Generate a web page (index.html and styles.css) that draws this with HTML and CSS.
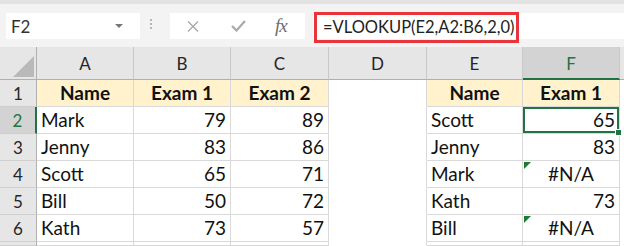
FILE: index.html
```
<!DOCTYPE html>
<html lang="en">
<head>
    <meta charset="UTF-8">
    <title>VLOOKUP example</title>
    <link rel="stylesheet" href="styles.css">
</head>
<body>
    <div class="formula-bar">
        <div class="name-box">
            <span>F2</span>
            <span class="caret"></span>
        </div>
        <div class="grip"><i></i><i></i><i></i></div>
        <div class="fx-box">
            <svg class="icon-cancel" width="12" height="11" viewBox="0 0 12 11">
                <path d="M1 0.5 L11 10.5 M11 0.5 L1 10.5" stroke="#a9a9a9" stroke-width="1.4" fill="none"/>
            </svg>
            <svg class="icon-enter" width="15" height="12" viewBox="0 0 15 12">
                <path d="M1 6 L5.5 10.5 L14 1" stroke="#a9a9a9" stroke-width="2.2" fill="none"/>
            </svg>
            <span class="icon-fx">fx</span>
        </div>
        <div class="formula-input">
            <span class="formula">=VLOOKUP(E2,A2:B6,2,0)</span>
        </div>
    </div>

    <div class="sheet">
        <!-- column headers -->
        <div class="cell corner"><span class="corner-mark"></span></div>
        <div class="cell col-head">A</div>
        <div class="cell col-head">B</div>
        <div class="cell col-head">C</div>
        <div class="cell col-head">D</div>
        <div class="cell col-head">E</div>
        <div class="cell col-head active">F</div>
        <div class="cell col-head"></div>

        <!-- row 1 -->
        <div class="cell row-head">1</div>
        <div class="cell head">Name</div>
        <div class="cell head">Exam 1</div>
        <div class="cell head">Exam 2</div>
        <div class="cell blank"></div>
        <div class="cell head">Name</div>
        <div class="cell head">Exam 1</div>
        <div class="cell blank"></div>

        <!-- row 2 -->
        <div class="cell row-head active">2</div>
        <div class="cell">Mark</div>
        <div class="cell num">79</div>
        <div class="cell num">89</div>
        <div class="cell blank"></div>
        <div class="cell">Scott</div>
        <div class="cell num selected">65</div>
        <div class="cell blank"></div>

        <!-- row 3 -->
        <div class="cell row-head">3</div>
        <div class="cell">Jenny</div>
        <div class="cell num">83</div>
        <div class="cell num">86</div>
        <div class="cell blank"></div>
        <div class="cell">Jenny</div>
        <div class="cell num">83</div>
        <div class="cell blank"></div>

        <!-- row 4 -->
        <div class="cell row-head">4</div>
        <div class="cell">Scott</div>
        <div class="cell num">65</div>
        <div class="cell num">71</div>
        <div class="cell blank"></div>
        <div class="cell">Mark</div>
        <div class="cell error">#N/A</div>
        <div class="cell blank"></div>

        <!-- row 5 -->
        <div class="cell row-head">5</div>
        <div class="cell">Bill</div>
        <div class="cell num">50</div>
        <div class="cell num">72</div>
        <div class="cell blank"></div>
        <div class="cell">Kath</div>
        <div class="cell num">73</div>
        <div class="cell blank"></div>

        <!-- row 6 -->
        <div class="cell row-head">6</div>
        <div class="cell">Kath</div>
        <div class="cell num">73</div>
        <div class="cell num">57</div>
        <div class="cell blank"></div>
        <div class="cell">Bill</div>
        <div class="cell error">#N/A</div>
        <div class="cell blank"></div>

        <!-- row 7 (cut off) -->
        <div class="cell row-head"></div>
        <div class="cell"></div>
        <div class="cell"></div>
        <div class="cell"></div>
        <div class="cell blank"></div>
        <div class="cell"></div>
        <div class="cell"></div>
        <div class="cell blank"></div>
    </div>
</body>
</html>
```

FILE: styles.css
```
body {
    margin: 0;
    font-family: Lato, "Open Sans", sans-serif;
    background: #fff;
    overflow: hidden;
}

/* formula bar */
.formula-bar {
    display: flex;
    align-items: flex-start;
    height: 47px;
    padding: 9px 0 0 6px;
    box-sizing: border-box;
    border-top: 4px solid #e2e2e2;
    background: #f3f3f3;
}
.name-box {
    width: 134px;
    height: 26px;
    box-sizing: border-box;
    padding: 0 17px 0 5px;
    display: flex;
    align-items: center;
    justify-content: space-between;
    background: #fff;
    font-size: 17px;
    color: #333;
}
.caret {
    width: 0;
    height: 0;
    border-left: 4px solid transparent;
    border-right: 4px solid transparent;
    border-top: 4px solid #777;
}
.grip {
    display: flex;
    flex-direction: column;
    gap: 2px;
    margin: 6px 18px 0 10px;
}
.grip i {
    width: 2px;
    height: 2px;
    background: #b5b5b5;
}
.fx-box {
    width: 135px;
    height: 26px;
    display: flex;
    align-items: center;
    padding-left: 17px;
    box-sizing: border-box;
    background: #fff;
}
.icon-enter {
    margin-left: 32px;
}
.icon-fx {
    margin-left: 29px;
    font-family: "Liberation Serif", serif;
    font-style: italic;
    font-size: 19px;
    color: #6e6e6e;
    letter-spacing: -1px;
}
.formula-input {
    flex: 1;
    height: 26px;
    margin-left: 8px;
    position: relative;
    background: #fff;
}
.formula {
    position: absolute;
    left: 1px;
    top: -1px;
    width: 205px;
    height: 31px;
    box-sizing: border-box;
    padding-left: 6px;
    border: 3px solid #e8343a;
    font-size: 16.5px;
    line-height: 24px;
    color: #222;
    white-space: nowrap;
}

/* grid */
.sheet {
    display: grid;
    grid-template-columns: 37px 97px 97px 98px 98px 96px 97px 1fr;
    grid-template-rows: 33px repeat(6, 27px) 1fr;
    height: 199px;
}
.cell {
    position: relative;
    display: flex;
    align-items: flex-end;
    padding: 0 4px 2px;
    box-sizing: border-box;
    border-right: 1px solid #d9d9d9;
    border-bottom: 1px solid #d9d9d9;
    font-size: 19px;
    color: #111;
    white-space: nowrap;
    overflow: hidden;
}
.num {
    justify-content: flex-end;
}
.error {
    justify-content: center;
}
.error::before {
    content: "";
    position: absolute;
    top: 1px;
    left: 1px;
    border-top: 7px solid #1d7a35;
    border-right: 7px solid transparent;
}
.blank {
    border-bottom-color: transparent;
}
.head {
    justify-content: center;
    background: #fff2cc;
    font-weight: bold;
}
.col-head,
.row-head,
.corner {
    background: #e6e6e6;
    color: #262626;
    font-size: 17px;
    justify-content: center;
}
.col-head {
    align-items: center;
    padding-top: 3px;
    border-right-color: #c8c8c8;
    border-bottom-color: #b0b0b0;
}
.row-head {
    border-right-color: #b0b0b0;
    border-bottom-color: #cfcfcf;
}
.col-head.active {
    background: #d3d3d3;
    color: #217346;
    border-bottom: 2px solid #217346;
}
.row-head.active {
    background: #d3d3d3;
    color: #217346;
    border-right: 2px solid #217346;
}
.corner {
    justify-content: flex-end;
    padding: 0 2px 2px 0;
    border-right-color: #b0b0b0;
    border-bottom-color: #b0b0b0;
}
.corner-mark {
    width: 0;
    height: 0;
    border-left: 21px solid transparent;
    border-bottom: 21px solid #b9b9b9;
}
.selected {
    box-shadow: inset 0 0 0 2px #217346;
    overflow: visible;
}
.selected::after {
    content: "";
    position: absolute;
    right: -3px;
    bottom: -3px;
    width: 5px;
    height: 5px;
    background: #217346;
    border: 1px solid #fff;
    z-index: 1;
}
```
